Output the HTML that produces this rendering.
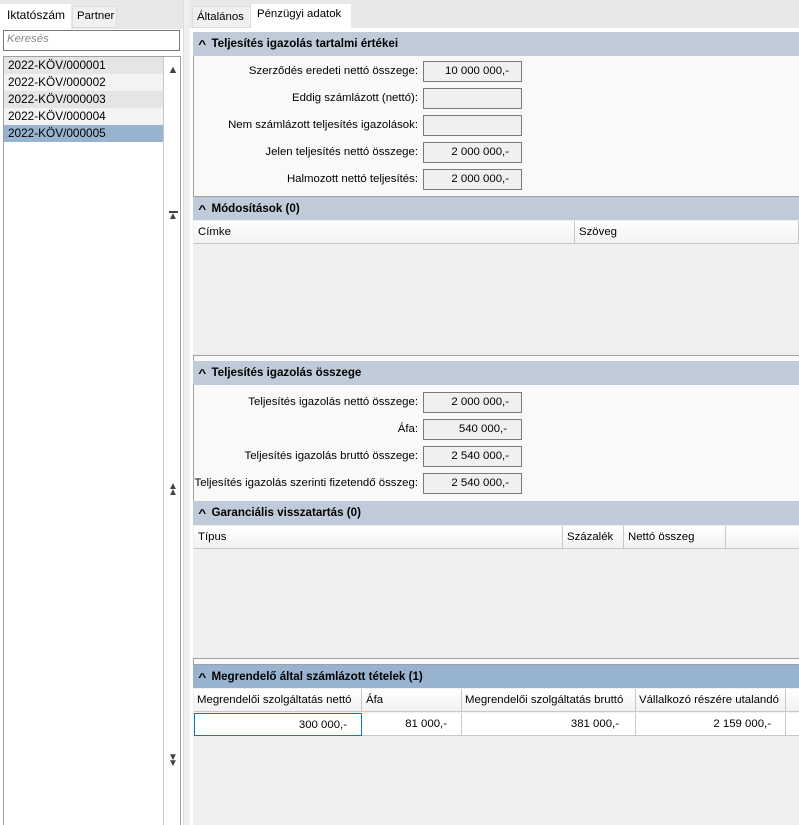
<!DOCTYPE html>
<html><head><meta charset="utf-8"><style>
*{box-sizing:border-box;margin:0;padding:0}
body{width:799px;height:825px;overflow:hidden;background:#f0f0f0;font-family:"Liberation Sans",sans-serif;font-size:11.4px;color:#000;position:relative}
.a{position:absolute}
.hdr{position:absolute;left:193px;right:0;height:24px;background:#bfcbd8;font-weight:bold;padding-left:6px;line-height:24px;font-size:11.6px}
.hdr b{display:inline-block;transform:scaleX(1.25) translateY(1px);margin-right:6px;font-size:11px}
.lbl{position:absolute;text-align:right;width:270px;left:148px}
.box{position:absolute;left:423px;width:99px;height:21px;border:1px solid #7a7a7a;background:#f0f0f0;text-align:right;padding-right:12px;line-height:19px}
.row{position:absolute;height:17px;left:4px;width:159px;padding-left:4px;line-height:17px;font-size:11.8px}
.th{position:absolute;height:23px;line-height:22px;padding-left:4px;border-right:1px solid #c8c8c8;background:linear-gradient(#fff,#f2f2f2);border-bottom:1px solid #c8c8c8;white-space:nowrap;overflow:hidden}
.td{position:absolute;height:23px;line-height:22px;text-align:right;padding-right:14px;background:#fff;border-right:1px solid #c8c8c8;border-bottom:1px solid #c8c8c8}
.ic{position:absolute;left:167px;font-size:10px;color:#444;line-height:6px;width:12px;text-align:center}
</style></head><body>
<!-- left pane -->
<div class="a" style="left:0;top:0;width:183px;height:29px;background:#e8e8e8"></div>
<div class="a" style="left:0;top:4px;width:71px;height:25px;background:#fff;padding:4px 0 0 7px;font-size:12px">Iktatószám</div>
<div class="a" style="left:72px;top:6px;width:45px;height:22px;background:#f0f0f0;border:1px solid #ddd;padding:3px 0 0 4px">Partner</div>
<div class="a" style="left:0;top:29px;width:183px;height:796px;background:#fff"></div>
<div class="a" style="left:3px;top:30px;width:177px;height:21px;border:1px solid #7a7a7a;background:#fff;color:#888;font-style:italic;padding:2px 0 0 3px">Keresés</div>
<div class="a" style="left:3px;top:56px;width:178px;height:769px;border:1px solid #a0a0a0;border-bottom:none;background:#fff"></div>
<div class="a" style="left:163px;top:57px;width:1px;height:768px;background:#c8c8c8"></div>
<div class="row" style="top:57px;background:#e5e5e5">2022-KÖV/000001</div>
<div class="row" style="top:74px;background:#f3f3f3">2022-KÖV/000002</div>
<div class="row" style="top:91px;background:#e5e5e5">2022-KÖV/000003</div>
<div class="row" style="top:108px;background:#f3f3f3">2022-KÖV/000004</div>
<div class="row" style="top:125px;background:#98b3d0">2022-KÖV/000005</div>
<div class="ic" style="top:67px;font-size:11px">▲</div>
<div class="ic" style="top:211px"><div style="border-top:2px solid #444;width:9px;margin:0 auto 1px"></div>▲</div>
<div class="ic" style="top:484px">▲<br>▲</div>
<div class="ic" style="top:755px">▼<br>▼</div>
<div class="a" style="left:183px;top:0;width:7px;height:825px;background:#f0f0f0;border-left:1px solid #ddd"></div>
<!-- right tabs -->
<div class="a" style="left:190px;top:0;width:609px;height:28px;background:#e8e8e8"></div>
<div class="a" style="left:192px;top:6px;width:59px;height:22px;background:#f0f0f0;border:1px solid #ddd;padding:4px 0 0 4px">Általános</div>
<div class="a" style="left:251px;top:4px;width:100px;height:25px;background:#fff;padding:4px 0 0 6px">Pénzügyi adatok</div>
<div class="a" style="left:190px;top:28px;width:609px;height:797px;background:#fff"></div>
<div class="a" style="left:193px;top:32px;width:606px;height:793px;background:#f9f9f9;border-left:1px solid #a0a0a0"></div>

<div class="hdr" style="top:32px"><b>^</b>Teljesítés igazolás tartalmi értékei</div>
<div class="lbl" style="top:65px">Szerződés eredeti nettó összege:</div><div class="box" style="top:61px">10 000 000,-</div>
<div class="lbl" style="top:92px">Eddig számlázott (nettó):</div><div class="box" style="top:88px"></div>
<div class="lbl" style="top:119px">Nem számlázott teljesítés igazolások:</div><div class="box" style="top:115px"></div>
<div class="lbl" style="top:146px">Jelen teljesítés nettó összege:</div><div class="box" style="top:142px">2 000 000,-</div>
<div class="lbl" style="top:173px">Halmozott nettó teljesítés:</div><div class="box" style="top:169px">2 000 000,-</div>

<div class="hdr" style="top:196px;border-top:1px solid #a0a0a0"><b>^</b>Módosítások (0)</div>
<div class="a" style="left:193px;top:220px;width:606px;height:136px;background:#f0f0f0;border-bottom:1px solid #a0a0a0"></div>
<div class="th" style="left:194px;top:221px;width:381px">Címke</div>
<div class="th" style="left:575px;top:221px;width:224px">Szöveg</div>

<div class="hdr" style="top:361px"><b>^</b>Teljesítés igazolás összege</div>
<div class="lbl" style="top:396px">Teljesítés igazolás nettó összege:</div><div class="box" style="top:392px">2 000 000,-</div>
<div class="lbl" style="top:423px">Áfa:</div><div class="box" style="top:419px;padding-right:14px">540 000,-</div>
<div class="lbl" style="top:450px">Teljesítés igazolás bruttó összege:</div><div class="box" style="top:446px">2 540 000,-</div>
<div class="lbl" style="top:477px">Teljesítés igazolás szerinti fizetendő összeg:</div><div class="box" style="top:473px">2 540 000,-</div>

<div class="hdr" style="top:501px"><b>^</b>Garanciális visszatartás (0)</div>
<div class="a" style="left:193px;top:525px;width:606px;height:134px;background:#f0f0f0;border-bottom:1px solid #a0a0a0"></div>
<div class="th" style="left:194px;top:526px;width:369px">Típus</div>
<div class="th" style="left:563px;top:526px;width:61px">Százalék</div>
<div class="th" style="left:624px;top:526px;width:102px">Nettó összeg</div>
<div class="th" style="left:726px;top:526px;width:73px;border-right:none"></div>

<div class="hdr" style="top:664px;background:#98b3d0;border-top:1px solid #a0a0a0"><b>^</b>Megrendelő által számlázott tételek (1)</div>
<div class="a" style="left:193px;top:688px;width:606px;height:137px;background:#f0f0f0"></div>
<div class="th" style="left:194px;top:689px;width:168px;padding-left:3px">Megrendelői szolgáltatás nettó</div>
<div class="th" style="left:362px;top:689px;width:100px">Áfa</div>
<div class="th" style="left:462px;top:689px;width:174px;padding-left:3px">Megrendelői szolgáltatás bruttó</div>
<div class="th" style="left:636px;top:689px;width:150px;padding-left:3px">Vállalkozó részére utalandó</div>
<div class="th" style="left:786px;top:689px;width:13px;border-right:none"></div>
<div class="td" style="left:194px;top:713px;width:168px;border:1px solid #0078d7">300 000,-</div>
<div class="td" style="left:362px;top:713px;width:100px">81 000,-</div>
<div class="td" style="left:462px;top:713px;width:174px;padding-right:16px">381 000,-</div>
<div class="td" style="left:636px;top:713px;width:150px">2 159 000,-</div>
<div class="td" style="left:786px;top:713px;width:13px;border-right:none"></div>
</body></html>
